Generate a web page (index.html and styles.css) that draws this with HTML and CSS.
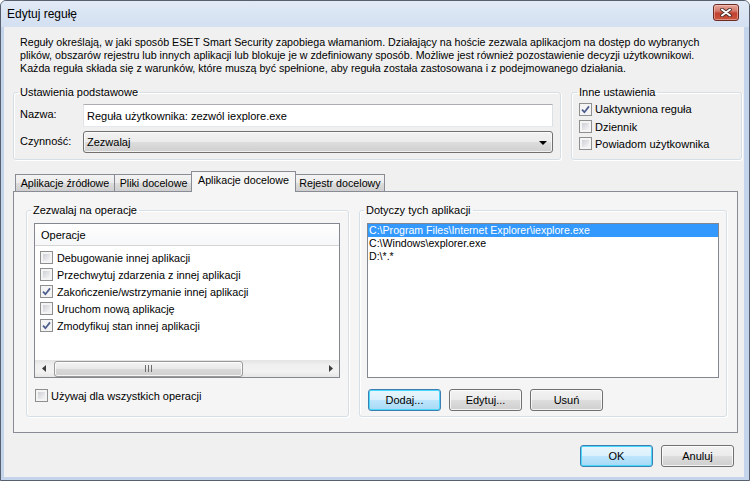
FILE: index.html
```html
<!DOCTYPE html>
<html lang="pl">
<head>
<meta charset="utf-8">
<title>Edytuj regułę</title>
<link rel="stylesheet" href="styles.css">
</head>
<body>
<div class="window">
  <div class="titlebar">
    <span class="title">Edytuj regułę</span>
    <span class="close" aria-label="Zamknij">
      <svg width="12" height="9" viewBox="0 0 12 9"><path d="M2 1.5 L10 7.5 M10 1.5 L2 7.5" stroke="#4a2a28" stroke-width="3.6" stroke-linecap="round"/><path d="M2 1.5 L10 7.5 M10 1.5 L2 7.5" stroke="#ffffff" stroke-width="2" stroke-linecap="round"/></svg>
    </span>
  </div>
  <div class="client">
    <p class="desc">
      <span class="line">Reguły określają, w jaki sposób ESET Smart Security zapobiega włamaniom. Działający na hoście zezwala aplikacjom na dostęp do wybranych</span>
      <span class="line">plików, obszarów rejestru lub innych aplikacji lub blokuje je w zdefiniowany sposób. Możliwe jest również pozostawienie decyzji użytkownikowi.</span>
      <span class="line">Każda reguła składa się z warunków, które muszą być spełnione, aby reguła została zastosowana i z podejmowanego działania.</span>
    </p>

    <div class="top-row">
      <fieldset class="group basic">
        <legend>Ustawienia podstawowe</legend>
        <div class="form-grid">
          <span class="lbl">Nazwa:</span>
          <div class="textbox">Reguła użytkownika: zezwól iexplore.exe</div>
          <span class="lbl">Czynność:</span>
          <div class="combo"><span>Zezwalaj</span><span class="arrow"></span></div>
        </div>
      </fieldset>
      <fieldset class="group other">
        <legend>Inne ustawienia</legend>
        <div class="check-row r1"><span class="cb checked"><svg width="9" height="9" viewBox="0 0 9 9"><path d="M1 4.6 L3.4 7.2 L8 1.4" fill="none" stroke="#4c5d8e" stroke-width="1.7"/></svg></span><span>Uaktywniona reguła</span></div>
        <div class="check-row"><span class="cb"></span><span>Dziennik</span></div>
        <div class="check-row"><span class="cb"></span><span>Powiadom użytkownika</span></div>
      </fieldset>
    </div>

    <div class="tabs">
      <div class="tab t1">Aplikacje źródłowe</div>
      <div class="tab t2">Pliki docelowe</div>
      <div class="tab t3 selected">Aplikacje docelowe</div>
      <div class="tab t4">Rejestr docelowy</div>
    </div>

    <div class="panel">
      <fieldset class="group ops">
        <legend>Zezwalaj na operacje</legend>
        <div class="listview">
          <div class="lv-header">Operacje</div>
          <div class="lv-items">
            <div class="lv-row"><span class="cb"></span><span>Debugowanie innej aplikacji</span></div>
            <div class="lv-row"><span class="cb"></span><span>Przechwytuj zdarzenia z innej aplikacji</span></div>
            <div class="lv-row"><span class="cb checked"><svg width="9" height="9" viewBox="0 0 9 9"><path d="M1 4.6 L3.4 7.2 L8 1.4" fill="none" stroke="#4c5d8e" stroke-width="1.7"/></svg></span><span>Zakończenie/wstrzymanie innej aplikacji</span></div>
            <div class="lv-row"><span class="cb"></span><span>Uruchom nową aplikację</span></div>
            <div class="lv-row"><span class="cb checked"><svg width="9" height="9" viewBox="0 0 9 9"><path d="M1 4.6 L3.4 7.2 L8 1.4" fill="none" stroke="#4c5d8e" stroke-width="1.7"/></svg></span><span>Zmodyfikuj stan innej aplikacji</span></div>
          </div>
          <div class="hscroll">
            <span class="sb-btn"><svg width="4" height="7" viewBox="0 0 4 7"><path d="M4 0 L0 3.5 L4 7 Z" fill="#3c3c3c"/></svg></span>
            <div class="sb-track">
              <div class="sb-thumb"><svg width="8" height="7" viewBox="0 0 8 7"><path d="M0.5 0 V7 M3.5 0 V7 M6.5 0 V7" stroke="#6d6d6d" stroke-width="1"/></svg></div>
            </div>
            <span class="sb-btn"><svg width="4" height="7" viewBox="0 0 4 7"><path d="M0 0 L4 3.5 L0 7 Z" fill="#3c3c3c"/></svg></span>
          </div>
        </div>
        <div class="check-row all"><span class="cb"></span><span>Używaj dla wszystkich operacji</span></div>
      </fieldset>

      <fieldset class="group apps">
        <legend>Dotyczy tych aplikacji</legend>
        <div class="listbox">
          <div class="lb-item sel">C:\Program Files\Internet Explorer\iexplore.exe</div>
          <div class="lb-item">C:\Windows\explorer.exe</div>
          <div class="lb-item">D:\*.*</div>
        </div>
        <div class="btn-row">
          <button class="btn default">Dodaj...</button>
          <button class="btn">Edytuj...</button>
          <button class="btn">Usuń</button>
        </div>
      </fieldset>
    </div>

    <div class="footer">
      <button class="btn default">OK</button>
      <button class="btn">Anuluj</button>
    </div>
  </div>
</div>
</body>
</html>
```

FILE: styles.css
```css
* { box-sizing: border-box; }
html, body { margin: 0; padding: 0; }
body {
  width: 750px;
  height: 481px;
  overflow: hidden;
  font-family: "Liberation Sans", Arial, sans-serif;
  font-size: 11px;
  color: #000;
  background: #ffffff;
}

.window {
  width: 750px;
  height: 481px;
  border: 1px solid #56606e;
  border-radius: 6px 6px 0 0;
  background: #c4d5eb;
  display: flex;
  flex-direction: column;
  overflow: hidden;
}

.titlebar {
  height: 26px;
  flex: none;
  display: flex;
  align-items: center;
  justify-content: space-between;
  padding: 0 10px 0 6px;
  background: linear-gradient(#e1eaf6, #d3e0f1);
}
.title { font-size: 12px; padding-bottom: 1px; }
.close {
  align-self: flex-start;
  margin-top: 3px;
  width: 26px;
  height: 17px;
  border: 1px solid #6e2b26;
  border-radius: 3px;
  background: linear-gradient(#e6a69c 0%, #d47a6c 40%, #c2412f 55%, #c9573f 100%);
  display: flex;
  align-items: center;
  justify-content: center;
  box-shadow: inset 0 0 0 1px rgba(255, 220, 210, 0.45);
}

.client {
  flex: 1;
  margin: 0 5px 3px 3px;
  background: #f0f0f0;
  display: flex;
  flex-direction: column;
}

.desc {
  margin: 9px 0 0 16px;
  line-height: 13px;
  font-size: 10.7px;
}
.desc .line { display: block; white-space: nowrap; }

/* group boxes */
.group {
  margin: 0;
  min-width: 0;
  border: 1px solid #d5dfe5;
  border-radius: 3px;
  box-shadow: inset 1px 1px 0 #fff, 1px 1px 0 #fff;
}
.group legend {
  padding: 0 2px;
  margin-left: -2px;
  line-height: 14px;
  font-size: 11px;
}

.top-row {
  display: flex;
  gap: 10px;
  margin-top: 10px;
  padding-left: 9px;
}
.basic {
  width: 548px;
  height: 75px;
  padding: 5px 7px 6px 6px;
}
.form-grid {
  display: grid;
  grid-template-columns: 63px 470px;
  grid-template-rows: 23px 22px;
  row-gap: 4px;
  align-items: center;
}
.lbl { padding-bottom: 3px; }
.textbox {
  height: 23px;
  background: #fff;
  border: 1px solid;
  border-color: #abadb3 #dbdfe6 #e3e9ef #e2e3ea;
  padding: 0 3px;
  display: flex;
  align-items: center;
  font-size: 11px;
  white-space: nowrap;
}
.combo {
  height: 22px;
  border: 1px solid #707070;
  border-radius: 3px;
  background: linear-gradient(#f2f2f2 0%, #ebebeb 50%, #dddddd 50%, #cfcfcf 100%);
  box-shadow: inset 0 0 0 1px rgba(255,255,255,0.7);
  display: flex;
  align-items: center;
  justify-content: space-between;
  padding: 0 5px 0 3px;
}
.arrow {
  width: 0;
  height: 0;
  border-left: 4px solid transparent;
  border-right: 4px solid transparent;
  border-top: 4px solid #000;
  margin-top: 1px;
}

.other {
  width: 171px;
  height: 75px;
  padding: 1px 4px 0 7px;
}

.check-row {
  display: flex;
  align-items: center;
  height: 17px;
  white-space: nowrap;
}
.check-row.r1 { height: 18px; }
.check-row .cb { margin-right: 3px; }

.cb {
  flex: none;
  width: 13px;
  height: 13px;
  border: 1px solid #8e8f8f;
  padding: 2px;
  background: linear-gradient(135deg, #cdd0d6, #f5f5f6) content-box, #f4f4f4;
  display: inline-flex;
  align-items: center;
  justify-content: center;
}
.cb.checked { padding: 1px; background: #f4f4f4; }

/* tabs */
.tabs {
  display: flex;
  align-items: flex-end;
  height: 20px;
  margin-top: 11px;
  padding-left: 11px;
}
.tab {
  height: 17px;
  border: 1px solid #898c95;
  border-bottom: none;
  line-height: 16px;
  font-size: 10.7px;
  text-align: center;
  white-space: nowrap;
  background: linear-gradient(#f3f3f3 0%, #ebebeb 50%, #dddddd 50%, #cfcfcf 100%);
}
.t1 { width: 100px; }
.t2 { width: 79px; margin-left: -1px; }
.t3 { width: 105px; margin-left: -2px; }
.t4 { width: 90px; margin-left: -1px; }
.tab.selected {
  height: 21px;
  margin-bottom: -1px;
  padding-bottom: 4px;
  position: relative;
  z-index: 2;
  background: #f5f5f5;
}

.panel {
  width: 725px;
  height: 242px;
  margin-left: 9px;
  border: 1px solid #898c95;
  background: #f5f5f5;
  display: flex;
  gap: 10px;
  padding: 11px 10px 0 12px;
}

.ops {
  width: 323px;
  height: 214px;
  padding: 6px 8px 0 7px;
}
.ops legend, .apps legend { margin-left: -3px; }

.listview {
  height: 155px;
  border: 1px solid #828790;
  background: #fff;
  display: flex;
  flex-direction: column;
}
.lv-header {
  height: 22px;
  flex: none;
  padding: 2px 0 0 6px;
  line-height: 19px;
  background: linear-gradient(#ffffff, #f6f7f8);
  border-bottom: 1px solid #d5d5d5;
}
.lv-items { padding: 3px 0 0 5px; font-size: 10.8px; }
.lv-row {
  height: 17px;
  display: flex;
  align-items: center;
  white-space: nowrap;
}
.lv-row .cb { margin-right: 4px; }

.hscroll {
  margin-top: auto;
  height: 17px;
  flex: none;
  display: flex;
  background: linear-gradient(#e3e3e3, #f0f0f0 30%, #f2f2f2 70%, #e6e6e6);
}
.sb-btn {
  width: 17px;
  flex: none;
  display: flex;
  align-items: center;
  justify-content: center;
}
.sb-track {
  flex: 1;
  display: flex;
  align-items: center;
  padding-left: 2px;
}
.sb-thumb {
  width: 189px;
  height: 16px;
  border: 1px solid #999999;
  border-radius: 3px;
  background: linear-gradient(#f4f4f4 0%, #e8e8e8 50%, #d9d9d9 50%, #cfcfcf 100%);
  box-shadow: inset 0 0 0 1px rgba(255,255,255,0.8);
  display: flex;
  align-items: center;
  justify-content: center;
}

.check-row.all { margin-top: 9px; margin-left: 1px; }

.apps {
  width: 368px;
  height: 214px;
  padding: 6px 7px 0 7px;
}
.listbox {
  height: 155px;
  border: 1px solid #828790;
  background: #fff;
  padding: 0;
}
.lb-item {
  height: 13px;
  line-height: 13px;
  padding-left: 1px;
  font-size: 10.6px;
  white-space: nowrap;
}
.lb-item.sel { background: #3399ff; color: #fff; }

.btn-row {
  display: flex;
  gap: 8px;
  margin-top: 11px;
  margin-left: 1px;
}

.btn {
  width: 73px;
  height: 22px;
  margin: 0;
  padding: 0;
  font-family: inherit;
  font-size: 11px;
  color: #000;
  border: 1px solid #707070;
  border-radius: 3px;
  background: linear-gradient(#f2f2f2 0%, #ebebeb 50%, #dddddd 50%, #cfcfcf 100%);
  box-shadow: inset 0 0 0 1px rgba(255,255,255,0.75);
}
.btn.default {
  border-color: #3c7fb1;
  background: linear-gradient(#eaf6fd 0%, #d9f0fc 50%, #bee6fd 50%, #a7d9f5 100%);
  box-shadow: inset 0 0 0 1px #48d8fb;
}

.footer {
  display: flex;
  justify-content: flex-end;
  gap: 8px;
  margin-top: 12px;
  padding-right: 10px;
}
```
